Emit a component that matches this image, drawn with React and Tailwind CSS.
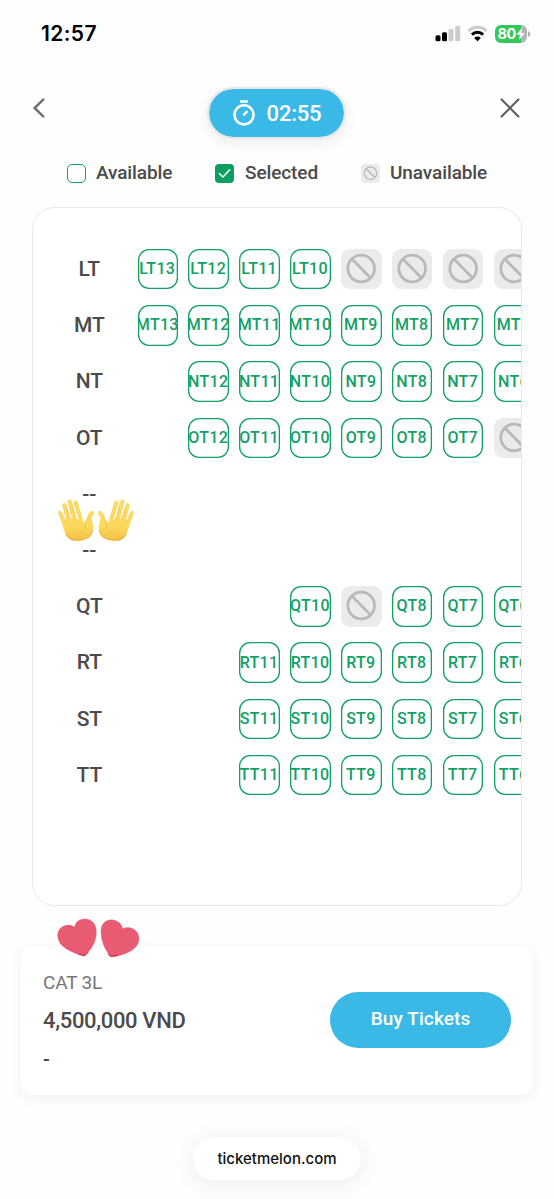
import React from 'react';

const X = 'x'; // seat that cannot be booked
const N = null; // no seat in this position

const rows = [
  { name: 'LT', seats: ['LT13', 'LT12', 'LT11', 'LT10', X, X, X, X] },
  { name: 'MT', seats: ['MT13', 'MT12', 'MT11', 'MT10', 'MT9', 'MT8', 'MT7', 'MT6'] },
  { name: 'NT', seats: [N, 'NT12', 'NT11', 'NT10', 'NT9', 'NT8', 'NT7', 'NT6'] },
  { name: 'OT', seats: [N, 'OT12', 'OT11', 'OT10', 'OT9', 'OT8', 'OT7', X] },
  { name: '--', seats: [] },
  { name: '--', seats: [] },
  { name: 'QT', seats: [N, N, N, 'QT10', X, 'QT8', 'QT7', 'QT6'] },
  { name: 'RT', seats: [N, N, 'RT11', 'RT10', 'RT9', 'RT8', 'RT7', 'RT6'] },
  { name: 'ST', seats: [N, N, 'ST11', 'ST10', 'ST9', 'ST8', 'ST7', 'ST6'] },
  { name: 'TT', seats: [N, N, 'TT11', 'TT10', 'TT9', 'TT8', 'TT7', 'TT6'] },
];

function Blocked({ className }) {
  return (
    <svg viewBox="0 0 40 40" className={className} fill="none" stroke="#b9b9b9" strokeWidth="2.8">
      <circle cx="20" cy="19.3" r="13.2" />
      <path d="M10.8 10 29.2 28.6" />
    </svg>
  );
}

function Seat({ seat }) {
  if (seat === N) return <div className="size-[40.4px] shrink-0" />;
  if (seat === X)
    return (
      <div className="size-[40.4px] shrink-0 rounded-[9px] bg-[#ebebeb]">
        <Blocked className="size-full" />
      </div>
    );
  return (
    <div className="flex size-[40.4px] shrink-0 items-center justify-center rounded-[11px] shadow-[inset_0_0_0_1.3px_#12a066] text-[16px] font-medium tracking-[0.3px] text-[#12a066]">
      <div className="flex w-full justify-center overflow-hidden">
        <span className="-ml-px shrink-0">{seat}</span>
      </div>
    </div>
  );
}

function StatusIcons() {
  return (
    <div className="flex items-center">
      <svg className="h-[17px] w-[26px]" viewBox="0 0 26 17">
        <rect x="0.5" y="10.3" width="5" height="6" rx="1.5" />
        <rect x="7" y="7.3" width="5" height="9" rx="1.5" />
        <rect x="13.5" y="4" width="5" height="12.3" rx="1.5" fill="#cbcbcb" />
        <rect x="20.2" y="0.8" width="5" height="15.5" rx="1.5" fill="#cbcbcb" />
      </svg>
      <svg className="ml-[6px] h-[17px] w-[21px]" viewBox="0 0 21 17" fill="none" strokeWidth="2.9">
        <path d="M1.4 5.9a13 13 0 0 1 18.2 0" stroke="#cbcbcb" />
        <path d="M4.9 9.6a8 8 0 0 1 11.2 0" stroke="#000" />
        <path d="M10.5 16.2 7.1 12.9a4.9 4.9 0 0 1 6.8 0Z" fill="#000" />
      </svg>
      <div className="ml-[7px] flex h-[18px] w-[32px] items-center overflow-hidden rounded-[6px] bg-linear-to-r from-[#34c759] from-80% to-[#b4b4b4] to-80% pl-[2.5px]">
        <span className="font-['Inter',sans-serif] text-[14.5px] font-bold tracking-[-0.4px] text-white">80</span>
        <svg className="h-[14px] w-[9px]" viewBox="0 0 9 14" fill="#fff">
          <path d="M6.2.5 0.5 7.8h3.4L2.8 13.5 8.8 6H5.2Z" />
        </svg>
      </div>
      <svg className="ml-[1px] h-[6px] w-[3px]" viewBox="0 0 3 6"><path d="M0 0q2.5.8 2.5 3T0 6Z" fill="#b4b4b4" /></svg>
    </div>
  );
}

function Hand({ fill }) {
  return (
    <g>
      <g stroke={fill} strokeLinecap="round" strokeLinejoin="round" fill="none">
        <path d="M60 128 78 178" strokeWidth="11" />
        <path d="M73 106 90 165" strokeWidth="13" />
        <path d="M89 95 106 162" strokeWidth="13" />
        <path d="M107 98 126 162" strokeWidth="13" />
        <path d="M155 130Q145 140 142 172" strokeWidth="14" />
      </g>
      <path
        d="M68 158Q72 184 79 197Q90 213 109 213Q129 213 144 204Q160 192 160 171L155 146L144 151Q137 160 129 155L122 148H78Z"
        fill={fill}
      />
      <path d="M78 194Q90 210 109 210Q130 211 145 202Q156 194 157 181" fill="none" stroke="#efa63a" strokeWidth="3.5" opacity=".65" />
      <g fill="none" stroke="#e8a52b" strokeWidth="2" strokeLinecap="round" opacity=".6">
        <path d="M67 130 79 157M80 114 92 151M97 107 109 149M138 152Q130 165 138 178" />
        <path d="M87 171Q92 156 111 157M91 185Q104 174 122 180" opacity=".4" />
      </g>
    </g>
  );
}

function Hands() {
  return (
    <svg className="absolute left-[57px] top-[496px] h-[48px] w-[78px]" viewBox="51 78 234 144">
      <defs>
        <linearGradient id="skin" gradientUnits="userSpaceOnUse" x1="0" y1="88" x2="0" y2="214">
          <stop offset="0" stopColor="#f9dc6c" />
          <stop offset=".65" stopColor="#fbd95c" />
          <stop offset="1" stopColor="#f5bf48" />
        </linearGradient>
      </defs>
      <Hand fill="url(#skin)" />
      <g transform="translate(336 0) scale(-1 1)">
        <Hand fill="url(#skin)" />
      </g>
    </svg>
  );
}

function Hearts() {
  return (
    <svg className="absolute left-[56px] top-[917px] h-[42px] w-[86px]" viewBox="168 81 258 126">
      <g fill="#e95b72" stroke="#c96672" strokeWidth="1">
        <path d="M254 198Q222 191 198 176Q173 160 173 137C173 106 208 98 224 112C226 88 251 82 270 90Q289 99 289 128C289 156 272 181 254 198Z" />
        <path d="M332 200C312 176 303 151 303 124C303 94 326 86 344 91Q364 97 368 116C389 105 417 119 417 146C417 180 370 198 332 200Z" />
      </g>
      <g fill="none" stroke="#c62549" strokeWidth="3" strokeLinecap="round">
        <path d="M236 193 254 197 264 187" />
        <path d="M325 192 332 199Q344 199 354 196" />
      </g>
    </svg>
  );
}

export default function App() {
  return (
    <div className="relative flex h-[1199px] w-[554px] flex-col overflow-hidden bg-[#fefefe] font-['Roboto',sans-serif] text-[#4b4b4b]">
      <header className="flex h-[66px] shrink-0 items-center justify-between pl-[41px] pr-[23px] pt-px">
        <span className="pt-px font-['Inter',sans-serif] text-[21px] font-semibold tracking-[0.4px] text-black">12:57</span>
        <StatusIcons />
      </header>

      <div className="flex h-[93px] shrink-0 items-start justify-between pl-[32px] pr-[33px] pt-[21px]">
        <svg className="mt-[10px] h-[22px] w-[14px]" viewBox="0 0 14 22" fill="none" stroke="#707070" strokeWidth="2.5" strokeLinecap="round">
          <path d="M11.2 2.7 2.6 11l8.6 8.3" />
        </svg>
        <div className="ml-[8px] flex h-[52px] w-[139px] items-center justify-center gap-[11px] rounded-full border-2 border-[#e8e8e8] bg-[#3bb9e6] bg-clip-padding text-white shadow-[0_4px_14px_rgba(0,0,0,0.07)]">
          <svg className="h-[28px] w-[24px]" viewBox="0 0 24 28" fill="none" stroke="#fff" strokeWidth="2.5">
            <circle cx="12" cy="15.8" r="9.5" />
            <path d="M8.2 2.4h7.6M11.2 16.4 15.5 12" />
          </svg>
          <span className="text-[22px] font-medium tracking-[-0.2px]">02:55</span>
        </div>
        <svg className="mt-[10px] size-[22px]" viewBox="0 0 22 22" fill="none" stroke="#606060" strokeWidth="2.2" strokeLinecap="round">
          <path d="M2.6 2.5l16.8 17M19.4 2.5l-16.8 17" />
        </svg>
      </div>

      <div className="flex h-[28px] shrink-0 items-center pl-[67px] text-[19px] font-medium tracking-[-0.1px]">
        <span className="mt-px size-[19px] rounded-[5px] border-[1.4px] border-[#12a066]" />
        <span className="ml-[10px] w-[119px]">Available</span>
        <span className="mt-px flex size-[19px] items-center justify-center rounded-[4px] bg-[#0a9e62]">
          <svg className="size-[15px]" viewBox="0 0 15 15" fill="none" stroke="#fff" strokeWidth="1.5">
            <path d="M2 7.3 6 11l7-7.4" />
          </svg>
        </span>
        <span className="ml-[11px] w-[116px]">Selected</span>
        <span className="mt-px size-[19px] rounded-[4px] bg-[#ebebeb]">
          <Blocked className="size-full" />
        </span>
        <span className="ml-[10px]">Unavailable</span>
      </div>

      <main className="ml-[32px] mt-[20px] h-[699px] w-[490px] shrink-0 overflow-hidden rounded-[23px] border-[1.5px] border-[#e9e9e9] bg-white pt-[33.2px]">
        {rows.map((row, i) => (
          <div key={i} className="flex h-[56.2px] items-center">
            <div className="w-[104.6px] shrink-0 pl-[8px] pt-px text-center text-[21px] font-medium tracking-[-0.1px]">{row.name}</div>
            <div className="flex gap-[10.5px]">
              {row.seats.map((seat, j) => (
                <Seat key={j} seat={seat} />
              ))}
            </div>
          </div>
        ))}
      </main>

      <section className="ml-[21px] mt-[40px] flex h-[149px] w-[512px] shrink-0 justify-between rounded-[12px] bg-white pl-[22px] pr-[22px] shadow-[0_3px_15px_rgba(0,0,0,0.055)]">
        <div className="flex flex-col pt-[23px]">
          <span className="text-[19px] leading-[28px] tracking-[-0.2px] text-[#777]">CAT 3L</span>
          <span className="mt-[9px] text-[22px] font-medium leading-[30px] tracking-[-0.35px]">4,500,000 VND</span>
          <span className="mt-[9px] text-[20px] font-medium leading-[28px]">-</span>
        </div>
        <button className="mt-[46px] h-[56px] w-[181px] rounded-full bg-[#3bb9e6] pb-px text-[19px] font-medium tracking-[0.1px] text-white">
          Buy Tickets
        </button>
      </section>

      <footer className="mt-[42px] flex shrink-0 justify-center">
        <div className="flex h-[43px] w-[168px] items-center justify-center rounded-full bg-white pt-[2px] font-['Inter',sans-serif] text-[15px] font-medium tracking-[0px] text-[#111] shadow-[0_4px_24px_rgba(0,0,0,0.075)]">
          ticketmelon.com
        </div>
      </footer>

      <Hands />
      <Hearts />
    </div>
  );
}
